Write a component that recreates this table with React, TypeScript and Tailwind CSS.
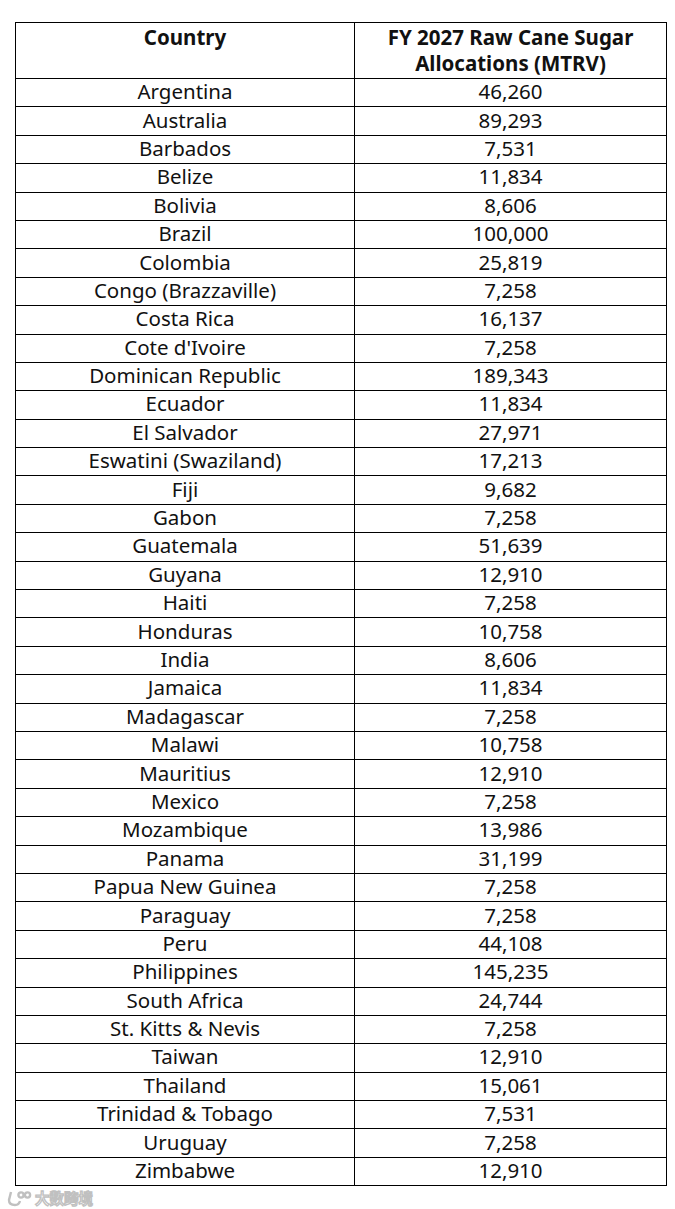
import React from "react";

const rows: [string, string][] = [
  ["Argentina", "46,260"],
  ["Australia", "89,293"],
  ["Barbados", "7,531"],
  ["Belize", "11,834"],
  ["Bolivia", "8,606"],
  ["Brazil", "100,000"],
  ["Colombia", "25,819"],
  ["Congo (Brazzaville)", "7,258"],
  ["Costa Rica", "16,137"],
  ["Cote d'Ivoire", "7,258"],
  ["Dominican Republic", "189,343"],
  ["Ecuador", "11,834"],
  ["El Salvador", "27,971"],
  ["Eswatini (Swaziland)", "17,213"],
  ["Fiji", "9,682"],
  ["Gabon", "7,258"],
  ["Guatemala", "51,639"],
  ["Guyana", "12,910"],
  ["Haiti", "7,258"],
  ["Honduras", "10,758"],
  ["India", "8,606"],
  ["Jamaica", "11,834"],
  ["Madagascar", "7,258"],
  ["Malawi", "10,758"],
  ["Mauritius", "12,910"],
  ["Mexico", "7,258"],
  ["Mozambique", "13,986"],
  ["Panama", "31,199"],
  ["Papua New Guinea", "7,258"],
  ["Paraguay", "7,258"],
  ["Peru", "44,108"],
  ["Philippines", "145,235"],
  ["South Africa", "24,744"],
  ["St. Kitts & Nevis", "7,258"],
  ["Taiwan", "12,910"],
  ["Thailand", "15,061"],
  ["Trinidad & Tobago", "7,531"],
  ["Uruguay", "7,258"],
  ["Zimbabwe", "12,910"],
];

export default function App() {
  return (
    <div
      className="w-[675px] h-[1209px] bg-white text-[#111] pt-[22px] pl-[15px]"
      style={{ fontFamily: '"Noto Sans", "Liberation Sans", sans-serif' }}
    >
      <table className="border-collapse w-[651px] table-fixed">
        <colgroup>
          <col className="w-[339px]" />
          <col className="w-[312px]" />
        </colgroup>
        <thead>
          <tr className="h-[56px]">
            <th className="border border-black align-top text-center font-bold text-[20.5px] leading-[26px] pt-[1px] pb-0">
              Country
            </th>
            <th className="border border-black align-top text-center font-bold text-[20.5px] leading-[26px] pt-[1px] pb-0">
              FY 2027 Raw Cane Sugar
              <br />
              Allocations (MTRV)
            </th>
          </tr>
        </thead>
        <tbody>
          {rows.map(([c, v]) => (
            <tr key={c} className="h-[28.4px]">
              <td className="border border-black text-center text-[20.5px] leading-[22px] px-0 pt-0 pb-[3px]">{c}</td>
              <td className="border border-black text-center text-[20.5px] leading-[22px] px-0 pt-0 pb-[3px]">{v}</td>
            </tr>
          ))}
        </tbody>
      </table>
      <div className="flex items-center gap-[3px] -ml-[9px] mt-[1px]">
        <svg width="26" height="17" viewBox="0 0 26 17" fill="none" stroke="#c0c0c0" strokeWidth="2.4">
          <path d="M5 2 L3 10 Q3 15 9 15 Q13 15 14 11" />
          <circle cx="15" cy="5" r="2.6" />
          <circle cx="21.5" cy="5" r="2.6" />
        </svg>
        <span
          className="text-[14.5px] font-bold text-white"
          style={{ fontFamily: '"Noto Sans CJK SC", sans-serif', WebkitTextStroke: "1.3px #c0c0c0" }}
        >
          大数跨境
        </span>
      </div>
    </div>
  );
}
